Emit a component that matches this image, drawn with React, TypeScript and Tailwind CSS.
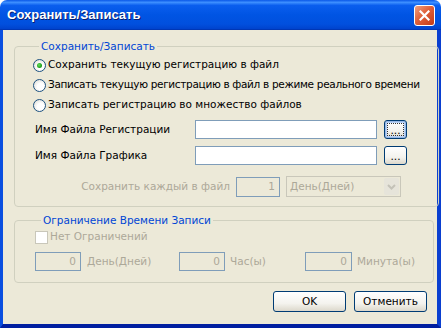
import React from "react";

const inputCls =
  "h-[19px] border border-[#7F9DB9] bg-white px-[3px] text-right leading-[17px]";
const disabledInputCls =
  "h-[19px] border border-[#7F9DB9] bg-[#ECE9D8] px-[4px] text-right leading-[17px] text-[#ACA899]";

function Radio({ checked }: { checked?: boolean }) {
  return (
    <span className="flex h-[13px] w-[13px] shrink-0 items-center justify-center rounded-full border border-[#1C5180] bg-[radial-gradient(circle_at_60%_60%,#ffffff_0%,#ffffff_35%,#D8D6CC_100%)]">
      {checked && (
        <span className="h-[5px] w-[5px] rounded-full bg-[radial-gradient(circle_at_40%_40%,#64E05A_0%,#21A121_60%,#1A8A1A_100%)]" />
      )}
    </span>
  );
}

function XpButton({ children, focused, className }: { children: React.ReactNode; focused?: boolean; className?: string }) {
  return (
    <button
      className={`flex items-center justify-center rounded-[3px] border border-[#003C74] bg-[linear-gradient(to_bottom,#FFFFFF_0%,#F4F3EE_60%,#DCD8CB_100%)] font-normal text-black ${
        focused ? "shadow-[inset_0_0_0_1px_#97B8E6,inset_0_0_0_2px_#BCD4F6]" : ""
      } ${className ?? ""}`}
    >
      {children}
    </button>
  );
}

export default function App() {
  return (
    <div className="h-[328px] w-[441px] overflow-hidden bg-white text-[10.5px] text-black [font-family:'DejaVu_Sans',sans-serif]">
      <div className="flex h-full flex-col overflow-hidden rounded-t-[7px]">
        {/* Title bar */}
        <div className="flex h-[30px] shrink-0 items-center justify-between bg-[linear-gradient(to_bottom,#0A58E8_0%,#3D8FFF_8%,#0A5EEE_18%,#0054E3_50%,#0150DE_80%,#0044CF_95%,#0030A8_100%)] pl-[7px] pr-[6px]">
          <span className="text-[13px] font-bold text-white [font-family:'Liberation_Sans',sans-serif] [text-shadow:1px_1px_0_#0A1E6E]">
            Сохранить/Записать
          </span>
          <div className="flex h-[21px] w-[21px] items-center justify-center rounded-[3px] border border-white bg-[linear-gradient(135deg,#F0A080_0%,#E0603A_45%,#C03A18_100%)]">
            <svg width="11" height="11" viewBox="0 0 11 11">
              <path d="M1.5 1.5 L9.5 9.5 M9.5 1.5 L1.5 9.5" stroke="white" strokeWidth="2.2" strokeLinecap="square" />
            </svg>
          </div>
        </div>

        {/* Body */}
        <div className="flex flex-1 flex-col whitespace-nowrap border-b-[4px] border-l-[3px] border-r-[4px] border-b-[#001EA0] border-l-[#0A4FE0] border-r-[#0A3FD0] bg-[#ECE9D8] pl-[11px] pr-[10px] pt-[10px]">
          {/* Group 1 */}
          <fieldset className="rounded-[4px] border border-[#D0D0BF] pb-[9px] pl-[18px] pr-[18px]">
            <legend className="ml-[6px] px-[2px] leading-[13px] text-[#0046D5]">Сохранить/Записать</legend>
            <div className="mt-[2px] flex flex-col">
              <div className="flex h-[20px] items-center gap-[2px]">
                <Radio checked />
                <span>Сохранить текущую регистрацию в файл</span>
              </div>
              <div className="flex h-[20px] items-center gap-[2px]">
                <Radio />
                <span className="tracking-[-0.32px]">Записать текущую регистрацию в файл в режиме реального времени</span>
              </div>
              <div className="flex h-[20px] items-center gap-[2px]">
                <Radio />
                <span>Записать регистрацию во множество файлов</span>
              </div>
            </div>
            <div className="ml-[2px] mt-[5px] flex h-[19px] items-center">
              <span className="w-[160px]">Имя Файла Регистрации</span>
              <div className={`${inputCls} w-[182px]`} />
              <XpButton focused className="ml-[7px] h-[19px] w-[23px]">
                <span className="flex h-[13px] w-[17px] items-end justify-center border border-dotted border-[#333] leading-[10px]">...</span>
              </XpButton>
            </div>
            <div className="ml-[2px] mt-[7px] flex h-[19px] items-center">
              <span className="w-[160px]">Имя Файла Графика</span>
              <div className={`${inputCls} w-[182px]`} />
              <XpButton className="ml-[7px] h-[19px] w-[23px]">
                <span className="leading-[10px]">...</span>
              </XpButton>
            </div>
            <div className="mt-[11px] flex h-[21px] items-center">
              <span className="w-[203px] pr-[6px] text-right text-[#ACA899]">Сохранить каждый в файл</span>
              <div className={`${disabledInputCls} h-[20px] w-[44px]`}>1</div>
              <div className="ml-[6px] flex h-[21px] w-[115px] items-center justify-between border border-[#C9C7BA] bg-[#ECE9D8] pl-[3px] pr-[1px] text-[#ACA899]">
                <span>День(Дней)</span>
                <span className="flex h-[17px] w-[15px] items-center justify-center rounded-[2px] bg-[#E6E4DA]">
                  <svg width="9" height="6" viewBox="0 0 9 6">
                    <path d="M1 1 L4.5 4.5 L8 1" stroke="#C4C2B8" strokeWidth="2" fill="none" />
                  </svg>
                </span>
              </div>
            </div>
          </fieldset>

          {/* Group 2 */}
          <fieldset className="mt-[7px] rounded-[4px] border border-[#D0D0BF] pb-[11px] pl-[20px] pr-[18px]">
            <legend className="ml-[6px] px-[2px] leading-[13px] text-[#0046D5]">Ограничение Времени Записи</legend>
            <div className="mt-[3px] flex h-[14px] items-center gap-[2px] text-[#ACA899]">
              <span className="h-[13px] w-[13px] border border-[#C9C7BA] bg-white" />
              <span>Нет Ограничений</span>
            </div>
            <div className="mt-[8px] flex h-[19px] items-center">
              <div className={`${disabledInputCls} w-[46px]`}>0</div>
              <span className="ml-[6px] w-[92px] text-[#ACA899]">День(Дней)</span>
              <div className={`${disabledInputCls} w-[46px]`}>0</div>
              <span className="ml-[5px] w-[75px] text-[#ACA899]">Час(ы)</span>
              <div className={`${disabledInputCls} w-[47px]`}>0</div>
              <span className="ml-[5px] text-[#ACA899]">Минута(ы)</span>
            </div>
          </fieldset>

          {/* Buttons */}
          <div className="mt-[8px] flex justify-end gap-[8px]">
            <XpButton className="h-[21px] w-[73px]">OK</XpButton>
            <XpButton className="h-[21px] w-[73px]">Отменить</XpButton>
          </div>
        </div>
      </div>
    </div>
  );
}
